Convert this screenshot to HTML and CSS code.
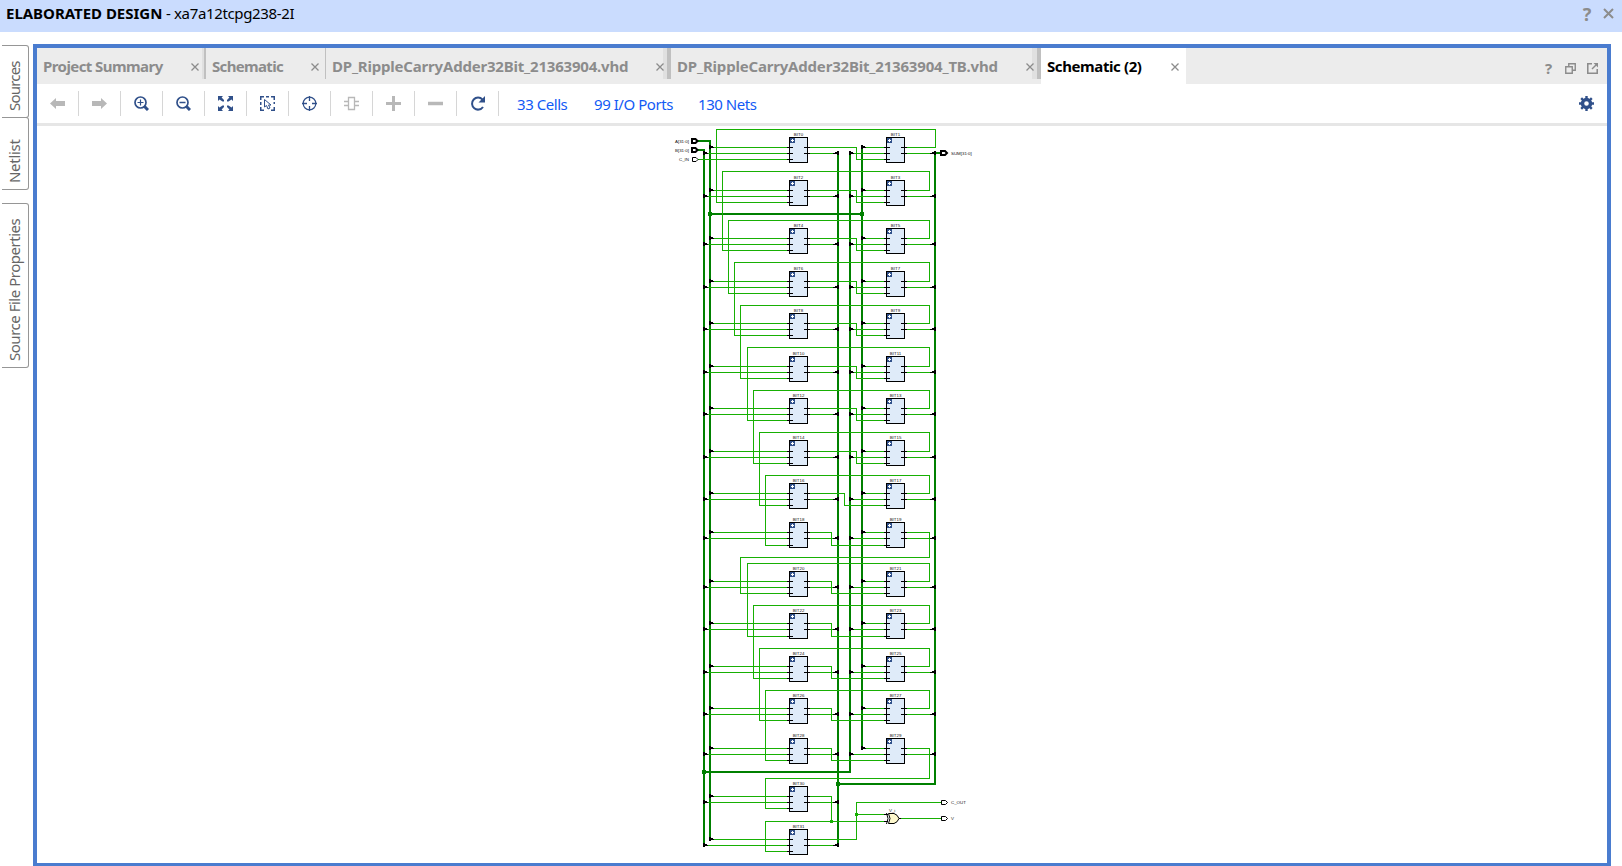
FILE: index.html
```html
<!DOCTYPE html>
<html lang="en">
<head>
<meta charset="utf-8">
<title>Elaborated Design</title>
<link rel="stylesheet" href="styles.css">
</head>
<body>
<header class="titlebar">
  <div class="title"><b class="title-name">ELABORATED DESIGN</b><span class="title-part">- xa7a12tcpg238-2I</span></div>
  <div class="title-actions">
    <span class="help help-lg">?</span>
    <svg class="close-lg" viewBox="0 0 11 11"><path d="M1 1L10 10M10 1L1 10"/></svg>
  </div>
</header>
<div class="workspace">
  <nav class="side">
    <div class="side-tab sources"><span>Sources</span></div>
    <div class="side-tab netlist"><span>Netlist</span></div>
    <div class="side-tab props"><span>Source File Properties</span></div>
  </nav>
  <main class="panel">
    <div class="tabs">
      <div class="tab t1"><span>Project Summary</span><svg class="x" viewBox="0 0 8 8"><path d="M.5 .5L7.5 7.5M7.5 .5L.5 7.5"/></svg></div>
      <div class="tab t2"><span>Schematic</span><svg class="x" viewBox="0 0 8 8"><path d="M.5 .5L7.5 7.5M7.5 .5L.5 7.5"/></svg></div>
      <div class="tab t3"><span>DP_RippleCarryAdder32Bit_21363904.vhd</span><svg class="x" viewBox="0 0 8 8"><path d="M.5 .5L7.5 7.5M7.5 .5L.5 7.5"/></svg></div>
      <div class="tab t4"><span>DP_RippleCarryAdder32Bit_21363904_TB.vhd</span><svg class="x" viewBox="0 0 8 8"><path d="M.5 .5L7.5 7.5M7.5 .5L.5 7.5"/></svg></div>
      <div class="tab t5 active"><span>Schematic (2)</span><svg class="x" viewBox="0 0 8 8"><path d="M.5 .5L7.5 7.5M7.5 .5L.5 7.5"/></svg></div>
      <div class="tab-actions">
        <span class="help">?</span>
        <svg class="act" viewBox="0 0 11 11"><path d="M3.75 3.5V.75H10.25V7.25H7.5M.75 3.75H7.25V10.25H.75Z"/></svg>
        <svg class="act" viewBox="0 0 11 11"><path d="M5 .75H.75V10.25H10.25V6" stroke-width="1.6"/><path d="M5 6L9 2"/><path class="fill" d="M6.5 0H11V4.500Z"/></svg>
      </div>
    </div>
    <div class="toolbar">
      <div class="tool"><svg class="icon off" viewBox="0 0 15 15"><path class="fill" d="M0 7.500L6 2V5H15V10H6V13Z"/></svg></div>
      <div class="tool"><svg class="icon off" viewBox="0 0 15 15"><path class="fill" d="M15 7.500L9 2V5H0V10H9V13Z"/></svg></div>
      <div class="tool"><svg class="icon" viewBox="0 0 15 15"><circle cx="6.500" cy="6.500" r="5.500" stroke-width="1.700"/><path d="M3.500 6.500H9.500M6.500 3.500V9.500" stroke-width="1.200"/><path d="M10.500 10.500L14 14" stroke-width="3"/></svg></div>
      <div class="tool"><svg class="icon" viewBox="0 0 15 15"><circle cx="6.500" cy="6.500" r="5.500" stroke-width="1.700"/><path d="M3.500 6.500H9.500" stroke-width="1.500"/><path d="M10.500 10.500L14 14" stroke-width="3"/></svg></div>
      <div class="tool"><svg class="icon" viewBox="0 0 15 15"><path class="fill" d="M0 0H5L3.600 1.500L6 4V5.500H4.500L1.500 3.500L0 5ZM15 0H10L11.400 1.500L9 4V5.500H10.500L13.500 3.500L15 5ZM0 15H5L3.600 13.500L6 11V9.500H4.500L1.500 11.500L0 10ZM15 15H10L11.400 13.500L9 11V9.500H10.500L13.500 11.500L15 10Z"/></svg></div>
      <div class="tool"><svg class="icon" viewBox="0 0 15 15"><path d="M.75 4V.75H4M6 .75H9M11 .75H14.250V4M.75 6V9M.75 11V14.250H4M14.250 11V14.250H11M14.250 6V8" stroke-width="1.500"/><path d="M4.500 3.500V11L6.500 9.500L8 13L10 12L8.500 9H11Z" stroke-width="1"/></svg></div>
      <div class="tool"><svg class="icon" viewBox="0 0 15 15"><circle cx="7.500" cy="7.500" r="6.300" stroke-width="1.200"/><path d="M7.500 0V5M7.500 10V15M0 7.500H5M10 7.500H15" stroke-width="1.300"/></svg></div>
      <div class="tool"><svg class="icon off" viewBox="0 0 15 15"><path d="M4.500 1.500H10.500V13.500H4.500Z" stroke-width="1.300"/><path d="M0 5.500H4M0 9.500H4M11 5.500H15M11 9.500H15" stroke-width="1.300"/></svg></div>
      <div class="tool"><svg class="icon off" viewBox="0 0 15 15"><path d="M7.500 0V15M0 7.500H15" stroke-width="3"/></svg></div>
      <div class="tool"><svg class="icon off" viewBox="0 0 15 15"><path d="M0 7.500H15" stroke-width="3.500"/></svg></div>
      <div class="tool"><svg class="icon" viewBox="0 0 15 15"><path d="M12.500 3.600A6 6 0 1 0 13 11" stroke-width="2"/><path class="fill" d="M15 0V6.500H8.500Z"/></svg></div>
      <div class="counts"><a class="c1">33 Cells</a><a class="c2">99 I/O Ports</a><a class="c3">130 Nets</a></div>
      <svg class="icon gear" viewBox="0 0 15 15"><circle cx="7.500" cy="7.500" r="4" stroke-width="3.400"/><path d="M7.500 0V3M7.500 12V15M0 7.500H3M12 7.500H15M2.200 2.200L4 4M11 11L12.800 12.800M2.200 12.800L4 11M11 4L12.800 2.200" stroke-width="2.400"/></svg>
    </div>
    <svg class="schematic" id="schematic" viewBox="37 126 1570 737"></svg>
  </main>
</div>
<script src="schematic.js"></script>
</body>
</html>
```
FILE: styles.css
```css
* { box-sizing: border-box; }
body {
  margin: 0;
  height: 866px;
  overflow: hidden;
  background: #fff;
  font-family: "Noto Sans", "Open Sans", sans-serif;
  font-size: 15px;
  line-height: 20px;
  white-space: nowrap;
}
svg { display: block; }
.titlebar {
  display: flex;
  justify-content: space-between;
  height: 32px;
  padding: 3px 8px 0 6px;
  background: #cadcfe;
}
.title { display: flex; color: #000; }
.title-name { width: 160px; letter-spacing: -.02px; }
.title-part { letter-spacing: -.35px; }
.title-actions { display: flex; gap: 10px; padding-top: 5px; }
.help { color: #8c8c8c; font-weight: 700; font-size: 15px; line-height: 11px; width: 11px; text-align: center; }
.help-lg { font-size: 18px; line-height: 12px; width: 12px; }
.close-lg { width: 11px; height: 11px; fill: none; stroke: #8c8c8c; stroke-width: 2; }

.workspace { display: flex; padding-top: 12px; height: 834px; }
.side { width: 33px; padding: 1px 0 0 2px; }
.side-tab {
  width: 27px;
  padding: 6px 0 0;
  line-height: 24px;
  writing-mode: vertical-rl;
  transform: rotate(180deg);
  border: 1px solid #969696;
  border-right: 0;
  border-radius: 3px 0 0 3px;
  color: #666;
}
.sources { height: 73px; letter-spacing: -.8px; }
.netlist { height: 73px; margin-top: -1px; letter-spacing: -.3px; }
.props { height: 165px; margin-top: 13px; letter-spacing: -.48px; }

.panel {
  width: 1578px;
  height: 823px;
  border: 4px solid #4a7ccf;
  display: flex;
  flex-direction: column;
}
.tabs { display: flex; flex: none; height: 36px; background: #ececec; }
.tab {
  display: flex;
  justify-content: space-between;
  height: 31px;
  padding: 8px 3px 0 6px;
  border-right: 2px solid #c0c0c0;
  font-weight: 700;
  color: #8c8c8c;
  letter-spacing: -.4px;
}
.x { width: 8px; height: 8px; margin: 7px 0 0; fill: none; stroke: #8c8c8c; stroke-width: 1.3; flex: none; }
.t1 { width: 169px; padding-right: 5px; box-shadow: inset -2px 0 #e0e0e0; letter-spacing: -.57px; }
.t2 { width: 120px; padding-right: 6px; border-right-width: 1px; letter-spacing: -.67px; }
.t3 { width: 345px; border-right-width: 4px; box-shadow: inset -4px 0 #e0e0e0; letter-spacing: -.2px; }
.t4 { width: 370px; border-right-width: 4px; box-shadow: inset -5px 0 #e0e0e0; letter-spacing: -.19px; }
.active { width: 145px; height: 36px; padding-right: 7px; border: 0; background: #fff; color: #000; }
.tab-actions { display: flex; gap: 11px; margin-left: auto; padding: 15px 9px 0 0; }
.act { width: 11px; height: 11px; fill: none; stroke: #8c8c8c; stroke-width: 1.4; }
.act .fill { fill: #8c8c8c; stroke: none; }

.toolbar { display: flex; flex: none; height: 42px; padding-top: 7px; border-bottom: 3px solid #e6e6e6; }
.tool { width: 42px; height: 25px; padding: 5px 0 0 13px; border-right: 1px solid #d6d6d6; }
.icon { width: 15px; height: 15px; fill: none; stroke: #30508a; }
.icon .fill { fill: #30508a; stroke: none; }
.off { stroke: #b8b8b8; }
.off .fill { fill: #b8b8b8; }
.counts { display: flex; padding: 3px 0 0 18px; color: #125af5; letter-spacing: -.45px; }
.c1 { width: 77px; }
.c2 { width: 104px; }
.gear { margin: 5px 13px 0 auto; }

.schematic { width: 1570px; height: 737px; flex: none; }
.net { fill: none; stroke: #17b003; shape-rendering: crispEdges; }
.bus { fill: none; stroke: #008000; stroke-width: 2; shape-rendering: crispEdges; }
.node { fill: #17b003; }
.bus-node { fill: #008000; }
.tap, .pin { fill: #000; shape-rendering: crispEdges; }
.cell { fill: #dfebf9; stroke: #000; }
.badge { fill: #30508a; }
.plus { fill: #fff; }
.port { fill: #fff; stroke: #000; }
.gate { fill: #fdf8cd; stroke: #000; }
.wire { fill: none; stroke: #000; }
.label { font-family: "Liberation Sans", sans-serif; font-size: 4.400px; fill: #111; }
```
FILE: schematic.js
```js
(() => {
// Rows of full-adder cells: top edge and the y of the three pins.
const rows = [
  [137, 147, 153, 159], [180, 190, 196, 202], [228, 238, 244, 250], [271, 281, 287, 293],
  [313, 323, 329, 335], [356, 366, 372, 378], [398, 408, 414, 420], [440, 451, 457, 463],
  [483, 493, 499, 505], [522, 532, 538, 545], [571, 581, 587, 593], [613, 623, 629, 636],
  [656, 666, 672, 678], [698, 708, 714, 720], [738, 748, 754, 760], [786, 796, 802, 808],
  [829, 839, 845, 851]
];
// Carry feedback from the right column to the next row: [right x, turn y, left x].
const carries = [
  [935, 129, 716], [929, 171, 722], [929, 220, 728], [929, 262, 734], [929, 305, 740],
  [929, 347, 747], [929, 390, 753], [929, 432, 759], [929, 475, 765], [929, 557, 740],
  [929, 563, 747], [929, 605, 753], [929, 648, 759], [929, 690, 765], [929, 778, 765]
];
const nets = [], buses = [], parts = [];
// Net through pixel centres.
const net = (...p) => {
  let d = "";
  for (let i = 0; i < p.length; i += 2) d += (i ? "L" : "M") + (p[i] + .5) + " " + (p[i + 1] + .5);
  nets.push(`<path class="net" stroke-linecap="square" d="${d}"/>`);
};
const bus = d => buses.push(`<path class="bus" d="${d}"/>`);
const rect = (c, x, y, w, h) => parts.push(`<rect class="${c}" x="${x}" y="${y}" width="${w}" height="${h}"/>`);
const label = (x, y, t, a) => parts.push(`<text class="label" x="${x}" y="${y}" text-anchor="${a || "start"}">${t}</text>`);
const tapRight = (x, y) => { rect("tap", x, y - 2, 2, 4); rect("tap", x + 2, y - 1, 2, 2); rect("tap", x + 4, y, 1, 1); };
const tapLeft = (x, y) => { rect("tap", x, y - 2, 2, 4); rect("tap", x - 2, y - 1, 2, 2); rect("tap", x - 4, y, 2, 1); };
const cell = (x, r, n) => {
  const [t, a, b, c] = r;
  rect("cell", x + .5, t + .5, 18, 25);
  rect("badge", x + 1, t + 1, 5, 5);
  rect("plus", x + 3, t + 2, 1, 3);
  rect("plus", x + 2, t + 3, 3, 1);
  [a, b, c].forEach(y => rect("pin", x - 2, y, 6, 1));
  [a, b].forEach(y => rect("pin", x + 15, y, 6, 1));
  label(x + 9.5, t - 1, "BIT" + n, "middle");
};

bus("M698 141H710V839"); bus("M698 150H704V846");
bus("M838 152V846"); bus("M850 152V772H704");
bus("M862 146V749"); bus("M710 214H862");
bus("M942 153H935V784H838");

rows.forEach((r, i) => {
  const [, a, b, c] = r;
  net(711, a, 788, a); net(705, b, 788, b); net(809, b, 834, b);
  tapRight(709, a); tapRight(703, b); tapLeft(837, b);
  cell(789, r, i === 16 ? 31 : i * 2);
  if (i < 15) {
    const s = i < 8 ? 856 : i === 8 ? 844 : 831;
    net(809, a, s, a, s, c, 885, c);
    net(863, a, 885, a); net(851, b, 885, b); net(906, b, 932, b);
    tapRight(861, a); tapRight(849, b); tapLeft(934, b);
    cell(886, r, i * 2 + 1);
    const [x, y, l] = carries[i], n = rows[i + 1][3];
    net(906, a, x, a, x, y, l, y, l, n, 788, n);
  }
});
net(698, 159, 788, 159);
net(809, 796, 831, 796, 831, 821);
net(885, 821, 765, 821, 765, 851, 788, 851);
net(809, 839, 856, 839, 856, 802, 941, 802);
net(856, 814, 885, 814);
net(900, 818, 941, 818);
rect("node", 830, 820, 3, 3); rect("node", 855, 813, 3, 3);
rect("bus-node", 708, 212, 4, 4); rect("bus-node", 860, 212, 4, 4);
rect("bus-node", 702, 770, 4, 4); rect("bus-node", 836, 782, 4, 4);

const port = (x, y, w, h, s) => parts.push(`<path class="port" stroke-width="${s}" d="M${x} ${y}h${w - 2}l2 ${h / 2}l-2 ${h / 2}h${2 - w}z"/>`);
port(692, 139, 5.5, 4, 2); port(692, 148, 5.5, 4, 2); port(692.5, 157.5, 5.5, 4, 1);
port(941, 151, 6, 4, 2); port(941.5, 800.5, 6, 4, 1); port(941.5, 816.5, 6, 4, 1);
label(675, 143, "A[31:0]"); label(675, 152, "B[31:0]"); label(679, 161, "C_IN");
label(951, 155, "SUM[31:0]"); label(951, 804, "C_OUT"); label(951, 820, "V");
label(889, 812, "V_i");
parts.push('<path class="gate" d="M888.5 813.5H894Q897.5 814.5 899 818.5Q897.5 822.5 894 823.5H888.5Q891.5 818.5 888.5 813.5Z"/>' +
  '<path class="wire" d="M884 814.5H888M884 821.5H888M899 818.5H901M886.5 813Q889.5 818.5 886.5 824"/>');

document.getElementById("schematic").innerHTML = buses.join("") + nets.join("") + parts.join("");
})();
```
